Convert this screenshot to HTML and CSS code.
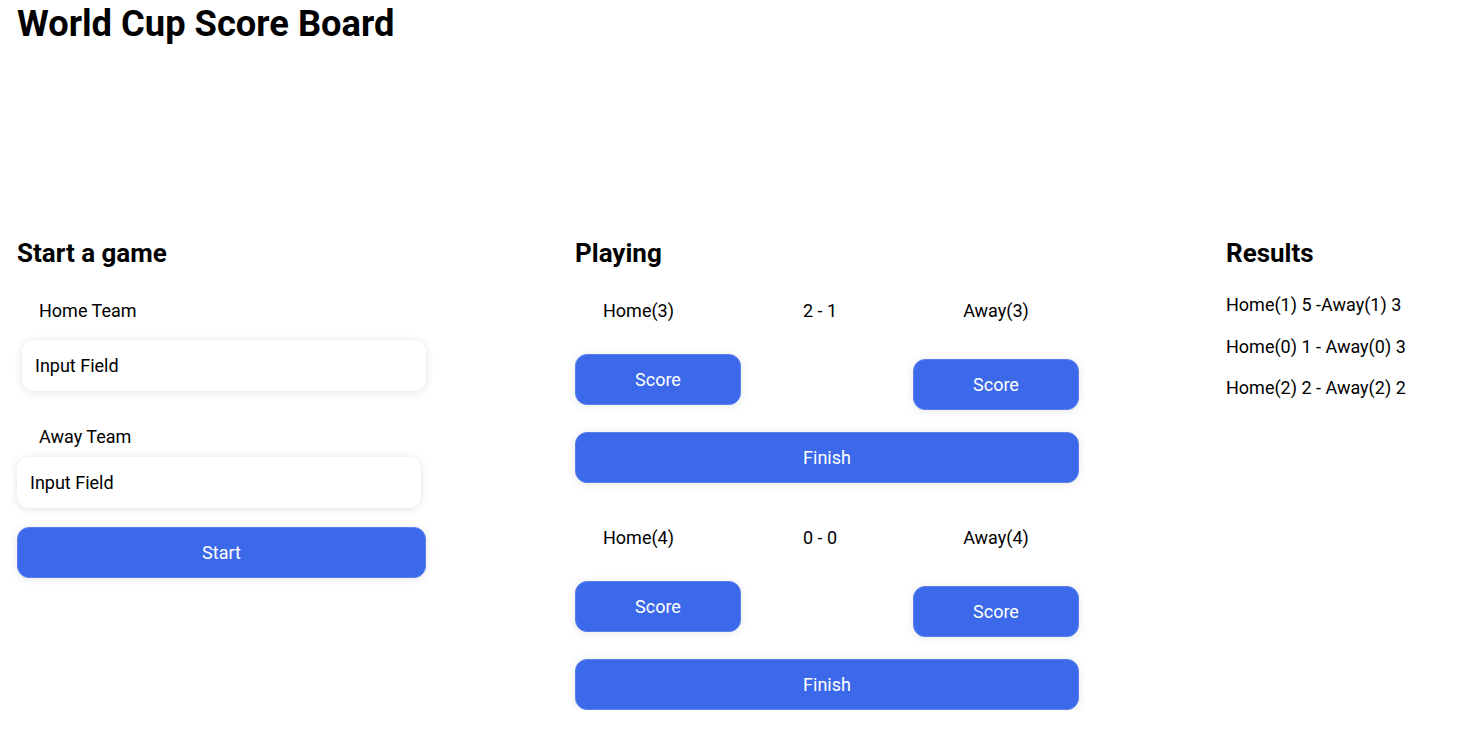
FILE: index.html
```html
<!DOCTYPE html>
<html lang="en">
<head>
<meta charset="utf-8">
<title>World Cup Score Board</title>
<link rel="stylesheet" href="styles.css">
</head>
<body>
<h1 class="title">World Cup Score Board</h1>
<main class="board">
  <section class="col col-start">
    <h2 class="heading">Start a game</h2>
    <div class="label label-home">Home Team</div>
    <div class="field field-home">Input Field</div>
    <div class="label label-away">Away Team</div>
    <div class="field field-away">Input Field</div>
    <button class="btn btn-start">Start</button>
  </section>
  <section class="col col-playing">
    <h2 class="heading">Playing</h2>
    <div class="game">
      <div class="teams">
        <span class="team-home">Home(3)</span>
        <span class="team-score">2 - 1</span>
        <span class="team-away">Away(3)</span>
      </div>
      <div class="score-row">
        <button class="btn btn-score">Score</button>
        <button class="btn btn-score btn-score-away">Score</button>
      </div>
      <button class="btn btn-finish">Finish</button>
    </div>
    <div class="game">
      <div class="teams">
        <span class="team-home">Home(4)</span>
        <span class="team-score">0 - 0</span>
        <span class="team-away">Away(4)</span>
      </div>
      <div class="score-row">
        <button class="btn btn-score">Score</button>
        <button class="btn btn-score btn-score-away">Score</button>
      </div>
      <button class="btn btn-finish">Finish</button>
    </div>
  </section>
  <section class="col col-results">
    <h2 class="heading">Results</h2>
    <ul class="results">
      <li>Home(1) 5 -Away(1) 3</li>
      <li>Home(0) 1 - Away(0) 3</li>
      <li>Home(2) 2 - Away(2) 2</li>
    </ul>
  </section>
</main>
</body>
</html>
```
FILE: styles.css
```css
* { box-sizing: border-box; }
html, body { margin: 0; padding: 0; background: #fff; }
body {
  font-family: Roboto, "Liberation Sans", Arial, sans-serif;
  color: #000;
  font-size: 18px;
}
.title {
  margin: 0;
  padding-left: 17px;
  font-size: 36.3px;
  line-height: 48px;
  font-weight: 700;
}
.board {
  display: flex;
  align-items: flex-start;
  gap: 148px;
  padding-left: 17px;
  margin-top: 190px;
}
.heading {
  margin: 0;
  font-size: 26px;
  line-height: 30px;
  font-weight: 700;
}
.col-start { width: 410px; display: flex; flex-direction: column; align-items: flex-start; }
.label {
  line-height: 22px;
  padding-left: 22px;
}
.label-home { margin-top: 32px; }
.label-away { margin-top: 35px; }
.field {
  width: 404px;
  height: 51px;
  background: #fff;
  border-radius: 12px;
  box-shadow: 0 1px 8px rgba(0, 0, 0, 0.12);
  padding-left: 13px;
  display: flex;
  align-items: center;
  line-height: 22px;
}
.field-home { margin-top: 18px; margin-left: 5px; }
.field-away { margin-top: 9px; }
.btn {
  font-family: inherit;
  font-size: 18px;
  color: #fff;
  background: #3c69e9;
  border: 1px solid #5b80ee;
  border-radius: 12px;
  height: 51px;
  box-shadow: 0 1px 8px rgba(0, 0, 0, 0.1);
  padding: 0;
  cursor: pointer;
}
.btn-start { width: 409px; margin-top: 19px; }
.col-playing { width: 504px; }
.game { display: flex; flex-direction: column; }
.col-playing .heading + .game { margin-top: 32px; }
.game + .game { margin-top: 44px; }
.teams {
  display: grid;
  grid-template-columns: 166px 1fr 166px;
  line-height: 22px;
}
.team-home { padding-left: 28px; }
.team-score { text-align: center; padding-right: 14px; }
.team-away { text-align: center; }
.score-row {
  display: flex;
  justify-content: space-between;
  align-items: flex-start;
  height: 56px;
  margin-top: 32px;
}
.btn-score { width: 166px; }
.btn-score-away { margin-top: 5px; }
.btn-finish { width: 504px; margin-top: 22px; }
.col-results { width: 220px; margin-left: -1px; }
.results {
  list-style: none;
  margin: 26px 0 0;
  padding: 0;
  display: flex;
  flex-direction: column;
  gap: 19.5px;
}
.results li { line-height: 22px; white-space: nowrap; }
```
